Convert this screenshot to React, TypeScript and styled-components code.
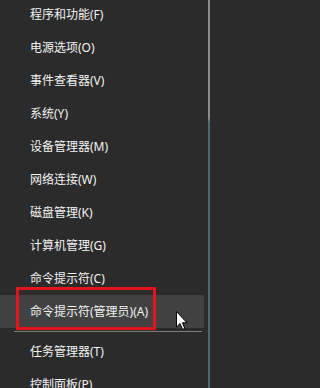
import styled, { createGlobalStyle } from 'styled-components';

const GlobalStyle = createGlobalStyle`
  html, body {
    margin: 0;
    padding: 0;
    width: 210px;
    height: 388px;
    overflow: hidden;
    background: #2b2b2b;
  }
`;

interface MenuItem {
  label: string;
  active?: boolean;
  separatorBefore?: boolean;
}

const items: MenuItem[] = [
  { label: '程序和功能(F)' },
  { label: '电源选项(O)' },
  { label: '事件查看器(V)' },
  { label: '系统(Y)' },
  { label: '设备管理器(M)' },
  { label: '网络连接(W)' },
  { label: '磁盘管理(K)' },
  { label: '计算机管理(G)' },
  { label: '命令提示符(C)' },
  { label: '命令提示符(管理员)(A)', active: true },
  { label: '任务管理器(T)', separatorBefore: true },
  { label: '控制面板(P)' },
];

const Cursor = () => (
  <CursorWrap>
    <svg width="12" height="19" viewBox="0 0 12 19">
      <path
        d="M0.5 0.5 L0.5 16 L4 12.6 L6.6 18.4 L8.8 17.4 L6.3 11.8 L11 11.8 Z"
        fill="#ffffff"
        stroke="#000000"
        strokeWidth="1"
        strokeLinejoin="round"
      />
    </svg>
  </CursorWrap>
);

const App = () => {
  return (
    <>
      <GlobalStyle />
      <Screen>
        <Menu>
          <List>
            {items.map((item) => (
              <Group key={item.label}>
                {item.separatorBefore && (
                  <SeparatorRow>
                    <SeparatorLine />
                  </SeparatorRow>
                )}
                <Row $active={item.active}>
                  <Label>{item.label}</Label>
                  {item.active && <Highlight />}
                </Row>
              </Group>
            ))}
          </List>
          <Cursor />
        </Menu>
        <DesktopEdge />
      </Screen>
    </>
  );
};

export default App;

const Screen = styled.div`
  display: flex;
  width: 210px;
  height: 388px;
  overflow: hidden;
`;

const Menu = styled.div`
  position: relative;
  width: 208px;
  height: 388px;
  background: #2b2b2b;
  font-family: 'Noto Sans', 'Noto Sans CJK SC', sans-serif;
`;

const List = styled.div`
  display: flex;
  flex-direction: column;
  margin-top: -2px;
  padding-right: 4px;
`;

const Group = styled.div`
  display: flex;
  flex-direction: column;
`;

const Row = styled.div<{ $active?: boolean }>`
  position: relative;
  display: flex;
  align-items: center;
  height: 33px;
  padding-left: 30px;
  background: ${({ $active }) => ($active ? '#414141' : 'transparent')};
`;

const Label = styled.span`
  color: #f2f2f2;
  font-size: 12px;
  line-height: 1;
  white-space: nowrap;
`;

const Highlight = styled.div`
  position: absolute;
  left: 16px;
  top: -8px;
  width: 134px;
  height: 37px;
  border: 3px solid #e3141c;
  border-radius: 1px;
`;

const SeparatorRow = styled.div`
  display: flex;
  align-items: center;
  height: 7px;
  padding: 0 2px 0 14px;
`;

const SeparatorLine = styled.div`
  flex: 1;
  height: 1px;
  background: #7c7c7c;
`;

const CursorWrap = styled.div`
  position: absolute;
  left: 176px;
  top: 311px;
  display: flex;
`;

const DesktopEdge = styled.div`
  width: 2px;
  height: 388px;
  background: linear-gradient(
    to bottom,
    #8c8c8c 0,
    #8c8c8c 118px,
    #4b6a70 122px,
    #4b6a70 100%
  );
`;
